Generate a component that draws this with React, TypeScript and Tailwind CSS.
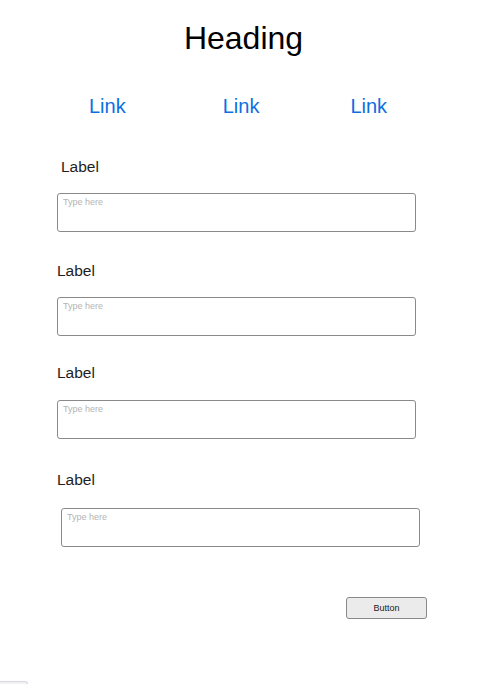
const font = { fontFamily: '"Liberation Sans", Arial, Helvetica, sans-serif' };

function Field({
  label,
  labelClass,
  inputClass,
  wrapClass,
}: {
  label: string;
  labelClass: string;
  inputClass: string;
  wrapClass: string;
}) {
  return (
    <div className={wrapClass}>
      <div className={`h-[16px] text-[15.5px] leading-[16px] text-[#1e1e1e] ${labelClass}`}>{label}</div>
      <textarea
        placeholder="Type here"
        className={`block h-[39px] w-[359px] resize-none rounded-[3px] border border-[#8a8a8a] bg-white pl-[5px] pt-[4px] text-[9px] leading-none outline-none placeholder:text-[#b4b4b4] ${inputClass}`}
        style={font}
      />
    </div>
  );
}

export default function App() {
  return (
    <div className="min-h-[684px] w-full bg-white" style={font}>
      <h1 className="pr-[12px] pt-[22px] text-center text-[32px] font-normal leading-none text-black">Heading</h1>

      <nav className="mt-[42px] flex h-[20px] text-[20px] leading-none text-[#0b6fe3]">
        <a href="#" className="ml-[89px]">Link</a>
        <a href="#" className="ml-[97px]">Link</a>
        <a href="#" className="ml-[91px]">Link</a>
      </nav>

      <Field label="Label" wrapClass="mt-[43px]" labelClass="ml-[61px]" inputClass="ml-[57px] mt-[18px]" />
      <Field label="Label" wrapClass="mt-[31px]" labelClass="ml-[57px]" inputClass="ml-[57px] mt-[18px]" />
      <Field label="Label" wrapClass="mt-[29px]" labelClass="ml-[57px]" inputClass="ml-[57px] mt-[19px]" />
      <Field label="Label" wrapClass="mt-[33px]" labelClass="ml-[57px]" inputClass="ml-[61px] mt-[20px]" />

      <button className="ml-[346px] mt-[50px] block h-[22px] w-[81px] rounded-[3px] border border-[#8a8a8a] bg-[#ebebeb] text-[9px] leading-none text-[#222]">
        Button
      </button>

      <div className="mt-[62px] h-[3px] w-[28px] rounded-tr-[3px] border-r border-t border-[#d8d8e0] bg-[#f2f2f5]" />
    </div>
  );
}
